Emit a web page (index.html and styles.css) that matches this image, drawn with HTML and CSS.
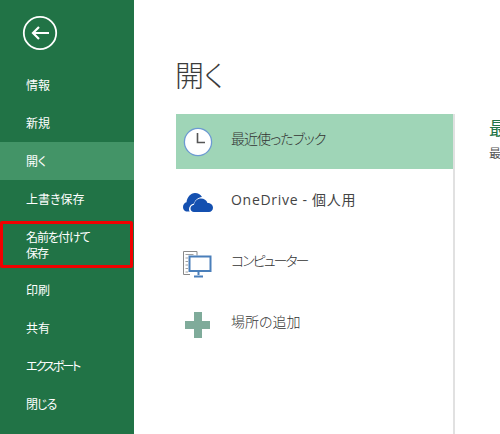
FILE: index.html
```html
<!DOCTYPE html>
<html lang="ja">
<head>
    <meta charset="UTF-8">
    <title>開く - Excel</title>
    <link rel="stylesheet" href="styles.css">
</head>
<body>
    <aside class="sidebar">
        <div class="back-btn">
            <svg width="36" height="36" viewBox="0 0 36 36">
                <circle cx="18" cy="18" r="16.2" fill="none" stroke="#fff" stroke-width="1.8"/>
                <path d="M27 18H11M17 12l-6 6 6 6" fill="none" stroke="#fff" stroke-width="2.2"/>
            </svg>
        </div>
        <nav class="side-nav">
            <a class="side-item">情報</a>
            <a class="side-item">新規</a>
            <a class="side-item active">開く</a>
            <a class="side-item">上書き保存</a>
            <a class="side-item marked"><span class="tight">名前を付けて<br>保存</span></a>
            <a class="side-item">印刷</a>
            <a class="side-item">共有</a>
            <a class="side-item"><span class="tighter">エクスポート</span></a>
            <a class="side-item"><span class="tight">閉じる</span></a>
        </nav>
    </aside>
    <main class="content">
        <h1 class="page-title">開く</h1>
        <div class="columns">
            <div class="places">
                <div class="place selected">
                    <svg class="place-icon" width="30" height="30" viewBox="0 0 30 30">
                        <circle cx="15" cy="15" r="13.6" fill="#fff" stroke="#6d9ad2" stroke-width="1.3"/>
                        <path d="M14.500 6v9.500H22" fill="none" stroke="#555" stroke-width="1.6"/>
                    </svg>
                    <span class="place-name tight">最近使ったブック</span>
                </div>
                <div class="place">
                    <svg class="place-icon" width="30" height="30" viewBox="0 0 30 30">
                        <path d="M3 23.500C1 23 0 21 0 19c0-2.500 1.500-4.300 3.500-4.800C4 9.500 7.500 5 12 5c3 0 5.500 1.500 7 4-4 .5-7 3-8 6.500-3 .5-5 3-5 5.500 0 1 .2 2 .8 2.500z" fill="#1450b0"/>
                        <path d="M11 24c-2 0-3.500-1.500-3.500-3.500s1.500-3.500 3.500-3.700C11.500 13 14.500 10.500 18 10.500c3 0 5.500 1.700 6.500 4.500C27.500 15 30 17 30 19.800 30 22.500 28 24 26 24z" fill="#1450b0"/>
                    </svg>
                    <span class="place-name latin">OneDrive - 個人用</span>
                </div>
                <div class="place">
                    <svg class="place-icon" width="30" height="30" viewBox="0 0 30 30">
                        <path d="M7 25.500H.5V2.500h13.500v4" fill="none" stroke="#8a8a8a"/>
                        <path d="M2.500 5.500h8M2.500 9h2.500M2.500 12.500h2.500M2.500 16h2.500M2.500 19.500h2.500M2.500 23h2.500" fill="none" stroke="#a0a0a0"/>
                        <rect x="6.500" y="7.500" width="21" height="14.500" fill="#fff" stroke="#4a7fba" stroke-width="2"/>
                        <path d="M15.500 23v3M11 27.500h9" fill="none" stroke="#4a7fba" stroke-width="2"/>
                    </svg>
                    <span class="place-name tighter">コンピューター</span>
                </div>
                <div class="place">
                    <svg class="place-icon" width="30" height="30" viewBox="0 0 30 30">
                        <path d="M11 2h8v9h8v8h-8v9h-8v-9H2v-8h9z" fill="#7fab9a"/>
                    </svg>
                    <span class="place-name">場所の追加</span>
                </div>
            </div>
            <div class="recent">
                <h2 class="recent-title">最</h2>
                <p class="recent-note">最</p>
            </div>
        </div>
    </main>
</body>
</html>
```

FILE: styles.css
```css
html, body {
    height: 100%;
}
body {
    margin: 0;
    display: flex;
    overflow: hidden;
    background-color: white;
    font-family: "Noto Sans CJK JP", "Noto Sans", sans-serif;
    font-feature-settings: "palt";
}
.tight {
    letter-spacing: -1px;
}
.tighter {
    letter-spacing: -2px;
}
.sidebar {
    width: 134px;
    flex-shrink: 0;
    background-color: #217346;
    color: white;
}
.back-btn {
    padding: 15px 0 0 22px;
    height: 51px;
    box-sizing: border-box;
}
.back-btn svg {
    display: block;
}
.side-nav {
    margin-top: 15px;
}
.side-item {
    display: flex;
    align-items: center;
    height: 38px;
    padding-left: 26px;
    font-size: 12px;
    line-height: 16px;
}
.side-item.active {
    background-color: #439467;
}
.side-item.marked {
    position: relative;
    height: 53px;
}
.side-item.marked::after {
    content: "";
    position: absolute;
    top: 3px;
    left: 0;
    right: 1px;
    bottom: 3px;
    border: 3px solid #f00000;
    border-radius: 2px;
}
.content {
    flex: 1;
    min-width: 0;
    padding-left: 42px;
}
.page-title {
    margin: 0 0 0 -1px;
    height: 114px;
    padding-top: 52px;
    box-sizing: border-box;
    font-size: 29px;
    line-height: 44px;
    font-weight: 300;
    color: #3c3c3c;
}
.columns {
    display: flex;
    height: 320px;
}
.places {
    width: 277px;
    flex-shrink: 0;
    border-right: 2px solid #e1e1e1;
}
.place {
    display: flex;
    align-items: center;
    gap: 18px;
    height: 55px;
    margin-bottom: 6px;
    padding-left: 7px;
    font-size: 14px;
    color: #333;
    white-space: nowrap;
}
.place.selected {
    background-color: #9fd5b7;
}
.place-icon {
    flex-shrink: 0;
}
.place-name {
    margin-bottom: 7px;
    font-weight: 300;
}
.place-name.latin {
    font-family: "Open Sans", "Noto Sans CJK JP", sans-serif;
    font-weight: 400;
    letter-spacing: .7px;
    color: #444;
}
.recent {
    padding-left: 34px;
    white-space: nowrap;
}
.recent-title {
    margin: 0;
    padding-top: 1px;
    font-size: 18px;
    line-height: 24px;
    font-weight: 400;
    color: #217346;
}
.recent-note {
    margin: 4px 0 0;
    font-size: 12px;
    line-height: 20px;
    color: #555;
}
```
